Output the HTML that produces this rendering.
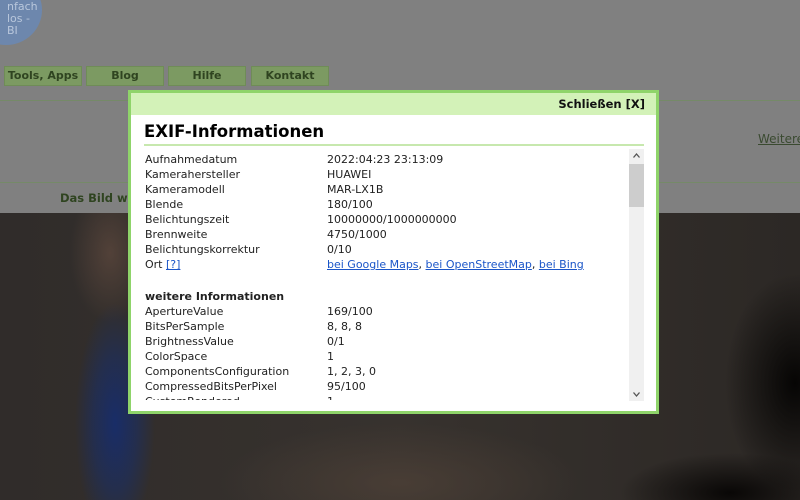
<!DOCTYPE html>
<html><head><meta charset="utf-8"><style>
*{margin:0;padding:0;box-sizing:border-box}
body{width:800px;height:500px;overflow:hidden;position:relative;background:#808080;font-family:Verdana,"DejaVu Sans",sans-serif}
.abs{position:absolute}
.photo{left:0;top:213px;width:800px;height:287px;background:
radial-gradient(ellipse 40px 120px at 115px 210px,rgba(22,45,110,.9) 0%,rgba(22,45,110,.5) 55%,rgba(22,45,110,0) 100%),
radial-gradient(ellipse 40px 70px at 110px 40px,rgba(90,70,60,.8) 0%,rgba(90,70,60,0) 100%),
radial-gradient(ellipse 180px 60px at 400px 270px,rgba(80,66,56,.7) 0%,rgba(80,66,56,0) 100%),
radial-gradient(ellipse 70px 110px at 795px 170px,#060504 0%,rgba(6,5,4,0) 100%),
radial-gradient(ellipse 110px 40px at 730px 280px,#090706 0%,rgba(9,7,6,0) 100%),
linear-gradient(90deg,#302c2a 0%,#37322e 50%,#2c2825 100%)}
.tab{top:66px;height:20px;background:#7c9a62;border:1px solid #6f8c57;color:#2f4420;font-weight:bold;font-size:11px;text-align:center;line-height:18px;white-space:nowrap;overflow:hidden}
.logo{left:-30px;top:-25px;width:72px;height:70px;border-radius:50%;background:#6d87ad;color:#b9c7dc;font-size:11px;padding:26px 0 0 37px;line-height:12px}
.modal{left:128px;top:90px;width:531px;height:324px;background:#fff;border:3px solid #8fd46a}
.hd{height:22px;background:#d3f2b8;text-align:right;font-weight:bold;font-size:11.5px;line-height:23px;padding-right:11px;color:#111}
h2{position:absolute;left:13px;top:29px;font-size:16.5px;font-weight:bold;color:#000;width:500px;border-bottom:2px solid #c7e8ae;padding-bottom:2px;line-height:20px}
.sc{position:absolute;left:14px;top:59px;width:480px;height:248px;overflow:hidden;font-size:11px;color:#222;line-height:15px}
.r{display:flex;height:15px;white-space:nowrap}.r span:first-child{width:182px}
a{color:#1a55c8;text-decoration:underline}
.sb{position:absolute;left:498px;top:56px;width:15px;height:252px;background:#f0f0f0}
</style></head><body>
<div class="abs logo">nfach<br>los -<br>BI</div>
<div class="abs tab" style="left:4px;width:78px">Tools, Apps</div>
<div class="abs tab" style="left:86px;width:78px">Blog</div>
<div class="abs tab" style="left:168px;width:78px">Hilfe</div>
<div class="abs tab" style="left:251px;width:78px">Kontakt</div>
<div class="abs" style="left:0;top:100px;width:800px;height:1px;background:#758a68"></div>
<div class="abs" style="left:0;top:182px;width:800px;height:1px;background:#758a68"></div>
<div class="abs" style="left:758px;top:132px;font-size:12px;color:#3a4a30;text-decoration:underline">Weitere</div>
<div class="abs" style="left:60px;top:191px;font-size:11.5px;font-weight:bold;color:#2f4420">Das Bild wu</div>
<div class="abs photo"></div>
<div class="abs modal">
<div class="hd">Schließen [X]</div>
<h2>EXIF-Informationen</h2>
<div class="sc">
<div class="r"><span>Aufnahmedatum</span><span>2022:04:23 23:13:09</span></div>
<div class="r"><span>Kamerahersteller</span><span>HUAWEI</span></div>
<div class="r"><span>Kameramodell</span><span>MAR-LX1B</span></div>
<div class="r"><span>Blende</span><span>180/100</span></div>
<div class="r"><span>Belichtungszeit</span><span>10000000/1000000000</span></div>
<div class="r"><span>Brennweite</span><span>4750/1000</span></div>
<div class="r"><span>Belichtungskorrektur</span><span>0/10</span></div>
<div class="r"><span>Ort <a>[?]</a></span><span><a>bei Google Maps</a>, <a>bei OpenStreetMap</a>, <a>bei Bing</a></span></div>
<div class="r" style="height:17px"></div>
<div class="r"><span style="font-weight:bold;width:auto">weitere Informationen</span></div>
<div class="r"><span>ApertureValue</span><span>169/100</span></div>
<div class="r"><span>BitsPerSample</span><span>8, 8, 8</span></div>
<div class="r"><span>BrightnessValue</span><span>0/1</span></div>
<div class="r"><span>ColorSpace</span><span>1</span></div>
<div class="r"><span>ComponentsConfiguration</span><span>1, 2, 3, 0</span></div>
<div class="r"><span>CompressedBitsPerPixel</span><span>95/100</span></div>
<div class="r"><span>CustomRendered</span><span>1</span></div>
</div>
<div class="sb">
<svg style="position:absolute;top:4px;left:4px" width="7" height="5"><path d="M0.5 4.5 L3.5 1 L6.5 4.5" fill="none" stroke="#555" stroke-width="1.3"/></svg>
<div style="position:absolute;top:15px;width:15px;height:43px;background:#cdcdcd"></div>
<svg style="position:absolute;bottom:4px;left:4px" width="7" height="5"><path d="M0.5 0.5 L3.5 4 L6.5 0.5" fill="none" stroke="#555" stroke-width="1.3"/></svg>
</div>
</div>
</body></html>
